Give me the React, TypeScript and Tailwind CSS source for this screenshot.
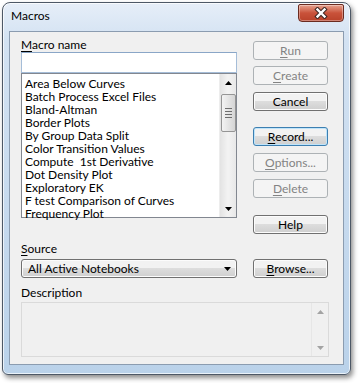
const macros = [
  "Area Below Curves",
  "Batch Process Excel Files",
  "Bland-Altman",
  "Border Plots",
  "By Group Data Split",
  "Color Transition Values",
  "Compute  1st Derivative",
  "Dot Density Plot",
  "Exploratory EK",
  "F test Comparison of Curves",
  "Frequency Plot",
];

function Btn({
  label,
  u,
  disabled,
  focused,
  className = "",
}: {
  label: string;
  u?: number;
  disabled?: boolean;
  focused?: boolean;
  className?: string;
}) {
  const text =
    u === undefined ? (
      label
    ) : (
      <>
        {label.slice(0, u)}
        <span className="underline underline-offset-[2px]">{label[u]}</span>
        {label.slice(u + 1)}
      </>
    );
  if (disabled) {
    return (
      <div
        className={`w-[75px] h-[19px] rounded-[3px] border border-[#adb2b5] bg-[#f4f4f4] text-[#838383] flex items-center justify-center leading-[15px] ${className}`}
      >
        {text}
      </div>
    );
  }
  return (
    <div
      className={`w-[75px] h-[19px] rounded-[3px] border ${
        focused
          ? "border-[#3c7fb1] shadow-[inset_0_0_0_1px_#bfe4fa]"
          : "border-[#707070] shadow-[inset_0_0_0_1px_#fcfcfc]"
      } bg-linear-to-b from-[#f2f2f2] from-45% via-[#dddddd] via-50% to-[#cfcfcf] text-black flex items-center justify-center leading-[15px] ${className}`}
    >
      {text}
    </div>
  );
}

function Arrow({ up, color = "#000" }: { up?: boolean; color?: string }) {
  return (
    <svg width="7" height="4" viewBox="0 0 7 4">
      <path d={up ? "M3.5 0 L7 4 L0 4 Z" : "M0 0 L7 0 L3.5 4 Z"} fill={color} />
    </svg>
  );
}

export default function App() {
  return (
    <div className="w-[359px] h-[383px] bg-white pt-[2px] pl-[2px] font-['Lato',sans-serif] text-[12px] text-black">
      <div className="w-[349px] h-[373px] rounded-t-[8px] rounded-b-[6px] border border-[#4d5866] bg-linear-to-b from-[#e6eef8] via-[#d3e2f2] via-10% to-[#bad2ea] shadow-[inset_0_0_0_1px_rgba(255,255,255,0.7),2px_3px_5px_rgba(0,0,0,0.45)] flex flex-col">
        {/* title bar */}
        <div className="h-[28px] flex items-start justify-between">
          <span className="pl-[8px] pt-[6px] leading-[14px] text-[12px] text-black">Macros</span>
          <div className="mt-[1px] mr-[6px] w-[46px] h-[18px] rounded-b-[4px] rounded-t-[2px] border border-[#6b2b20] bg-linear-to-b from-[#e6a28f] via-[#c9523a] via-50% to-[#b9422a] shadow-[inset_0_0_0_1px_rgba(255,255,255,0.35)] flex items-center justify-center">
            <svg width="14" height="12" viewBox="0 0 14 12">
              <path d="M3.5 2.5 L10.5 9.5 M10.5 2.5 L3.5 9.5" stroke="#3b2622" strokeWidth="4.4" strokeLinecap="square" />
              <path d="M3.5 2.5 L10.5 9.5 M10.5 2.5 L3.5 9.5" stroke="#ffffff" strokeWidth="2.4" strokeLinecap="square" />
            </svg>
          </div>
        </div>

        {/* client area */}
        <div className="mx-[6px] h-[334px] border border-[#8b9cb0] bg-[#f0f0f0] pl-[11px]">
          <div className="flex items-start gap-[16px]">
            <div className="w-[216px] pt-[5px] flex flex-col">
              <div className="h-[15px] leading-[15px]">
                <span className="underline underline-offset-[2px]">M</span>acro name
              </div>
              <div className="h-[21px] border border-[#a5bdd8] border-t-[#8aa6c7] bg-white" />
              <div className="h-[145px] border border-[#828790] bg-white flex">
                <div className="flex-1 pl-[3px] pt-[3px]">
                  {macros.map((m) => (
                    <div key={m} className="h-[13px] leading-[13px] whitespace-pre">
                      {m}
                    </div>
                  ))}
                </div>
                <div className="w-[17px] bg-linear-to-r from-[#e3e3e3] via-[#f3f3f3] to-[#e8e8e8] border-l border-[#ededed] flex flex-col items-center">
                  <div className="h-[17px] flex items-center justify-center">
                    <Arrow up />
                  </div>
                  <div className="mt-[3px] w-[15px] h-[38px] rounded-[2px] border border-[#959595] bg-linear-to-r from-[#f3f3f3] to-[#d5d5d5] flex flex-col items-center justify-center gap-[2px]">
                    <div className="w-[7px] h-px bg-[#6e6e6e]" />
                    <div className="w-[7px] h-px bg-[#6e6e6e]" />
                    <div className="w-[7px] h-px bg-[#6e6e6e]" />
                    <div className="w-[7px] h-px bg-[#6e6e6e]" />
                  </div>
                  <div className="flex-1" />
                  <div className="h-[17px] flex items-center justify-center">
                    <Arrow />
                  </div>
                </div>
              </div>
            </div>

            <div className="pt-[9px] flex flex-col">
              <Btn label="Run" u={0} disabled />
              <Btn label="Create" u={0} disabled className="mt-[6px]" />
              <Btn label="Cancel" className="mt-[7px]" />
              <Btn label="Record..." u={0} focused className="mt-[16px]" />
              <Btn label="Options..." u={0} disabled className="mt-[7px]" />
              <Btn label="Delete" u={0} disabled className="mt-[7px]" />
              <Btn label="Help" className="mt-[17px]" />
            </div>
          </div>

          <div className="mt-[7px] h-[15px] leading-[15px]">
            <span className="underline underline-offset-[2px]">S</span>ource
          </div>
          <div className="mt-[3px] flex items-start gap-[16px]">
            <div className="w-[216px] h-[19px] rounded-[3px] border border-[#707070] shadow-[inset_0_0_0_1px_#fcfcfc] bg-linear-to-b from-[#f2f2f2] from-45% via-[#dddddd] via-50% to-[#cfcfcf] flex items-center pl-[6px] pr-[5px]">
              <span className="flex-1 leading-[15px]">All Active Notebooks</span>
              <Arrow />
            </div>
            <Btn label="Browse..." u={0} />
          </div>

          <div className="mt-[7px] h-[15px] leading-[15px]">Description</div>
          <div className="mt-[2px] w-[308px] h-[55px] border border-[#dadada] bg-[#f0f0f0] flex justify-end">
            <div className="w-[17px] border-l border-[#e6e6e6] bg-[#f0f0f0] flex flex-col">
              <div className="h-[17px] flex items-center justify-center">
                <Arrow up color="#a3a3a3" />
              </div>
              <div className="flex-1" />
              <div className="h-[17px] flex items-center justify-center">
                <Arrow color="#a3a3a3" />
              </div>
            </div>
          </div>
        </div>
      </div>
    </div>
  );
}
